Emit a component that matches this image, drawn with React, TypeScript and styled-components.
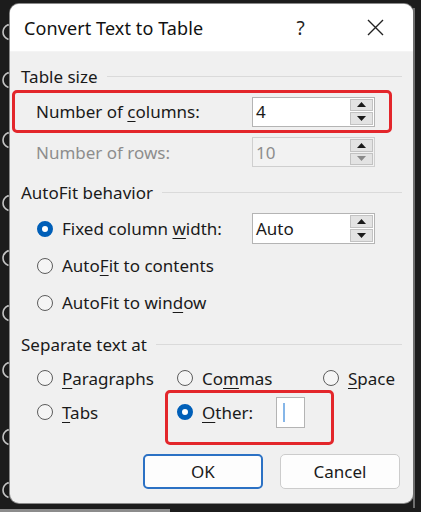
import styled, { createGlobalStyle } from "styled-components";
import { ReactNode } from "react";

const GlobalStyle = createGlobalStyle`
  html, body {
    margin: 0;
    padding: 0;
    background: #1c1c1c;
  }
  body {
    font-family: "Noto Sans", "Open Sans", "Liberation Sans", sans-serif;
    color: #1a1a1a;
  }
`;

const Screen = styled.div`
  width: 421px;
  height: 512px;
  display: flex;
  flex-direction: column;
  overflow: hidden;
  background: #1c1c1c;
`;

const Stage = styled.div`
  display: flex;
  align-items: flex-start;
`;

const BackdropStrip = styled.div`
  width: 10px;
  height: 504px;
  display: flex;
  flex-direction: column;
  overflow: hidden;
`;

const BackdropMark = styled.svg`
  display: block;
  flex-shrink: 0;
`;

const RightStrip = styled.div`
  width: 8px;
  height: 500px;
  margin-top: 8px;
  border-left: 2px solid #6e6e6e;
  box-sizing: border-box;
`;

const ScrollBar = styled.div`
  width: 170px;
  height: 4px;
  margin-top: 1px;
  background: #8c8c8c;
`;

const Dialog = styled.div`
  width: 403px;
  height: 499px;
  margin-top: 4px;
  border-radius: 9px;
  overflow: hidden;
  background: #f0f0f0;
  display: flex;
  flex-direction: column;
  box-shadow: 0 0 0 1px #8a8a8a;
`;

const TitleBar = styled.div`
  height: 47px;
  flex-shrink: 0;
  background: #ffffff;
  display: flex;
  align-items: center;
  padding-left: 14px;
  border-bottom: 1px solid #f4f4f4;
`;

const Title = styled.div`
  flex: 1;
  font-size: 18px;
  color: #111;
  letter-spacing: 0.1px;
`;

const TitleButton = styled.div<{ $width: number }>`
  width: ${(p) => p.$width}px;
  height: 47px;
  display: flex;
  align-items: center;
  justify-content: center;
  font-size: 19px;
  color: #222;
`;

const Body = styled.div`
  display: flex;
  flex-direction: column;
  padding-top: 14px;
`;

const GroupHeader = styled.div<{ $gap: number }>`
  display: flex;
  align-items: center;
  height: 20px;
  margin-top: ${(p) => p.$gap}px;
  padding-left: 11px;
  padding-right: 11px;
  gap: 9px;
  font-size: 17px;
  color: #1a1a1a;

  &::after {
    content: "";
    flex: 1;
    height: 1px;
    background: #dadada;
  }
`;

const Highlight = styled.div`
  margin: 4px 0 0 2px;
  width: 380px;
  height: 43px;
  box-sizing: border-box;
  border: 3px solid #e3262b;
  border-radius: 5px;
  display: flex;
  align-items: center;
  padding-left: 21px;
`;

const FieldRow = styled.div<{ $indent: number; $gap: number }>`
  display: flex;
  align-items: center;
  padding-left: ${(p) => p.$indent}px;
  margin-top: ${(p) => p.$gap}px;
`;

const FieldLabel = styled.div<{ $disabled?: boolean }>`
  width: 216px;
  font-size: 17px;
  color: ${(p) => (p.$disabled ? "#8d8d8d" : "#1a1a1a")};
`;

const Spin = styled.div<{ $disabled?: boolean; $height?: number }>`
  width: 123px;
  height: ${(p) => p.$height ?? 30}px;
  box-sizing: border-box;
  border: 1px solid ${(p) => (p.$disabled ? "#cfcfcf" : "#b4b4b4")};
  background: ${(p) => (p.$disabled ? "#f2f2f2" : "#ffffff")};
  display: flex;
  align-items: stretch;
`;

const SpinValue = styled.div<{ $disabled?: boolean }>`
  flex: 1;
  display: flex;
  align-items: center;
  padding-left: 3px;
  font-size: 17px;
  color: ${(p) => (p.$disabled ? "#8d8d8d" : "#1a1a1a")};
`;

const SpinButtons = styled.div`
  width: 23px;
  margin: 1px 1px 1px 0;
  display: flex;
  flex-direction: column;
  gap: 1px;
`;

const SpinButton = styled.div<{ $faded?: boolean }>`
  flex: 1;
  display: flex;
  align-items: center;
  justify-content: center;
  background: #e3e3e3;
  border: 1px solid #c2c2c2;
  color: ${(p) => (p.$faded ? "#8a8a8a" : "#1a1a1a")};
`;

const RadioRow = styled.div<{ $gap?: number }>`
  display: flex;
  align-items: center;
  height: 37px;
  padding-left: 27px;
  margin-top: ${(p) => p.$gap ?? 0}px;
`;

const OptionsGrid = styled.div`
  display: grid;
  grid-template-columns: 140px 146px auto;
  grid-auto-rows: 34px;
  padding-left: 27px;
  margin-top: 7px;
`;

const OptionCell = styled.div`
  position: relative;
  display: flex;
  align-items: center;
`;

const Radio = styled.label<{ $width?: number }>`
  display: flex;
  align-items: center;
  gap: 9px;
  width: ${(p) => (p.$width ? `${p.$width}px` : "auto")};
  font-size: 17px;
  color: #1a1a1a;
  white-space: nowrap;
`;

const RadioDot = styled.span<{ $checked?: boolean }>`
  width: 16px;
  height: 16px;
  box-sizing: border-box;
  border-radius: 50%;
  flex-shrink: 0;
  border: ${(p) => (p.$checked ? "5px solid #005fb8" : "1px solid #5c5c5c")};
  background: ${(p) => (p.$checked ? "#ffffff" : "#f5f5f5")};
`;

const Key = styled.span`
  text-decoration: underline;
  text-underline-offset: 3px;
  text-decoration-thickness: 1px;
`;

const OtherBox = styled.div`
  width: 29px;
  height: 31px;
  box-sizing: border-box;
  margin-left: 23px;
  border: 1px solid #b4b4b4;
  background: #ffffff;
  display: flex;
  align-items: center;
  padding-left: 6px;

  &::before {
    content: "";
    width: 2px;
    height: 19px;
    background: #86b6e8;
  }
`;

const OtherMark = styled.div`
  position: absolute;
  left: -12px;
  top: -5px;
  width: 169px;
  height: 55px;
  box-sizing: border-box;
  border: 3px solid #e3262b;
  border-radius: 5px;
  pointer-events: none;
`;

const ButtonRow = styled.div`
  display: flex;
  justify-content: flex-end;
  gap: 17px;
  padding-right: 13px;
  margin-top: 25px;
`;

const Button = styled.button<{ $primary?: boolean }>`
  width: 120px;
  height: 35px;
  box-sizing: border-box;
  border-radius: 5px;
  background: #fdfdfd;
  border: ${(p) => (p.$primary ? "2px solid #2b71c4" : "1px solid #cccccc")};
  font-family: inherit;
  font-size: 17px;
  color: #1a1a1a;
  padding: 0;
`;

const Tri = ({ up }: { up?: boolean }) => (
  <svg width="9" height="5" viewBox="0 0 9 5">
    <path d={up ? "M4.5 0 L9 5 L0 5 Z" : "M0 0 L9 0 L4.5 5 Z"} fill="currentColor" />
  </svg>
);

const SpinBox = ({ value, disabled, height }: { value: string; disabled?: boolean; height?: number }) => (
  <Spin $disabled={disabled} $height={height}>
    <SpinValue $disabled={disabled}>{value}</SpinValue>
    <SpinButtons>
      <SpinButton>
        <Tri up />
      </SpinButton>
      <SpinButton $faded={disabled}>
        <Tri />
      </SpinButton>
    </SpinButtons>
  </Spin>
);

const Option = ({
  checked,
  width,
  children,
}: {
  checked?: boolean;
  width?: number;
  children: ReactNode;
}) => (
  <Radio $width={width}>
    <RadioDot $checked={checked} />
    <span>{children}</span>
  </Radio>
);

// y positions of the document text peeking out behind the dialog
const markRows = [23, 71, 131, 194, 249, 304, 361, 428, 481];

export default function App() {
  return (
    <>
      <GlobalStyle />
      <Screen>
        <Stage>
          <BackdropStrip>
            {markRows.map((y, i) => (
              <BackdropMark
                key={y}
                width="10"
                height="18"
                viewBox="0 0 10 18"
                style={{ marginTop: i === 0 ? y : y - markRows[i - 1] - 18 }}
              >
                <path d="M8.5 1.5 Q3 4 3 9 Q3 14 8.5 16.5" fill="none" stroke="#c4c4c4" strokeWidth="1.6" />
                <path d="M8.5 1.5 L9.5 3" stroke="#c4c4c4" strokeWidth="1.2" />
              </BackdropMark>
            ))}
          </BackdropStrip>
          <Dialog>
            <TitleBar>
              <Title>Convert Text to Table</Title>
              <TitleButton $width={73}>?</TitleButton>
              <TitleButton $width={76}>
                <svg width="17" height="17" viewBox="0 0 17 17">
                  <path d="M1 1 L16 16 M16 1 L1 16" stroke="#222" strokeWidth="1.4" />
                </svg>
              </TitleButton>
            </TitleBar>
            <Body>
              <GroupHeader $gap={0}>Table size</GroupHeader>
              <Highlight>
                <FieldLabel>
                  Number of <Key>c</Key>olumns:
                </FieldLabel>
                <SpinBox value="4" />
              </Highlight>
              <FieldRow $indent={26} $gap={4}>
                <FieldLabel $disabled>Number of rows:</FieldLabel>
                <SpinBox value="10" disabled />
              </FieldRow>

              <GroupHeader $gap={15}>AutoFit behavior</GroupHeader>
              <RadioRow $gap={8}>
                <Option checked width={215}>
                  Fixed column <Key>w</Key>idth:
                </Option>
                <SpinBox value="Auto" height={31} />
              </RadioRow>
              <RadioRow>
                <Option>
                  Auto<Key>F</Key>it to contents
                </Option>
              </RadioRow>
              <RadioRow>
                <Option>
                  AutoFit to win<Key>d</Key>ow
                </Option>
              </RadioRow>

              <GroupHeader $gap={13}>Separate text at</GroupHeader>
              <OptionsGrid>
                <OptionCell>
                  <Option>
                    <Key>P</Key>aragraphs
                  </Option>
                </OptionCell>
                <OptionCell>
                  <Option>
                    Co<Key>m</Key>mas
                  </Option>
                </OptionCell>
                <OptionCell>
                  <Option>
                    <Key>S</Key>pace
                  </Option>
                </OptionCell>
                <OptionCell>
                  <Option>
                    <Key>T</Key>abs
                  </Option>
                </OptionCell>
                <OptionCell>
                  <Option checked>
                    <Key>O</Key>ther:
                  </Option>
                  <OtherBox />
                  <OtherMark />
                </OptionCell>
              </OptionsGrid>

              <ButtonRow>
                <Button $primary>OK</Button>
                <Button>Cancel</Button>
              </ButtonRow>
            </Body>
          </Dialog>
          <RightStrip />
        </Stage>
        <ScrollBar />
      </Screen>
    </>
  );
}
